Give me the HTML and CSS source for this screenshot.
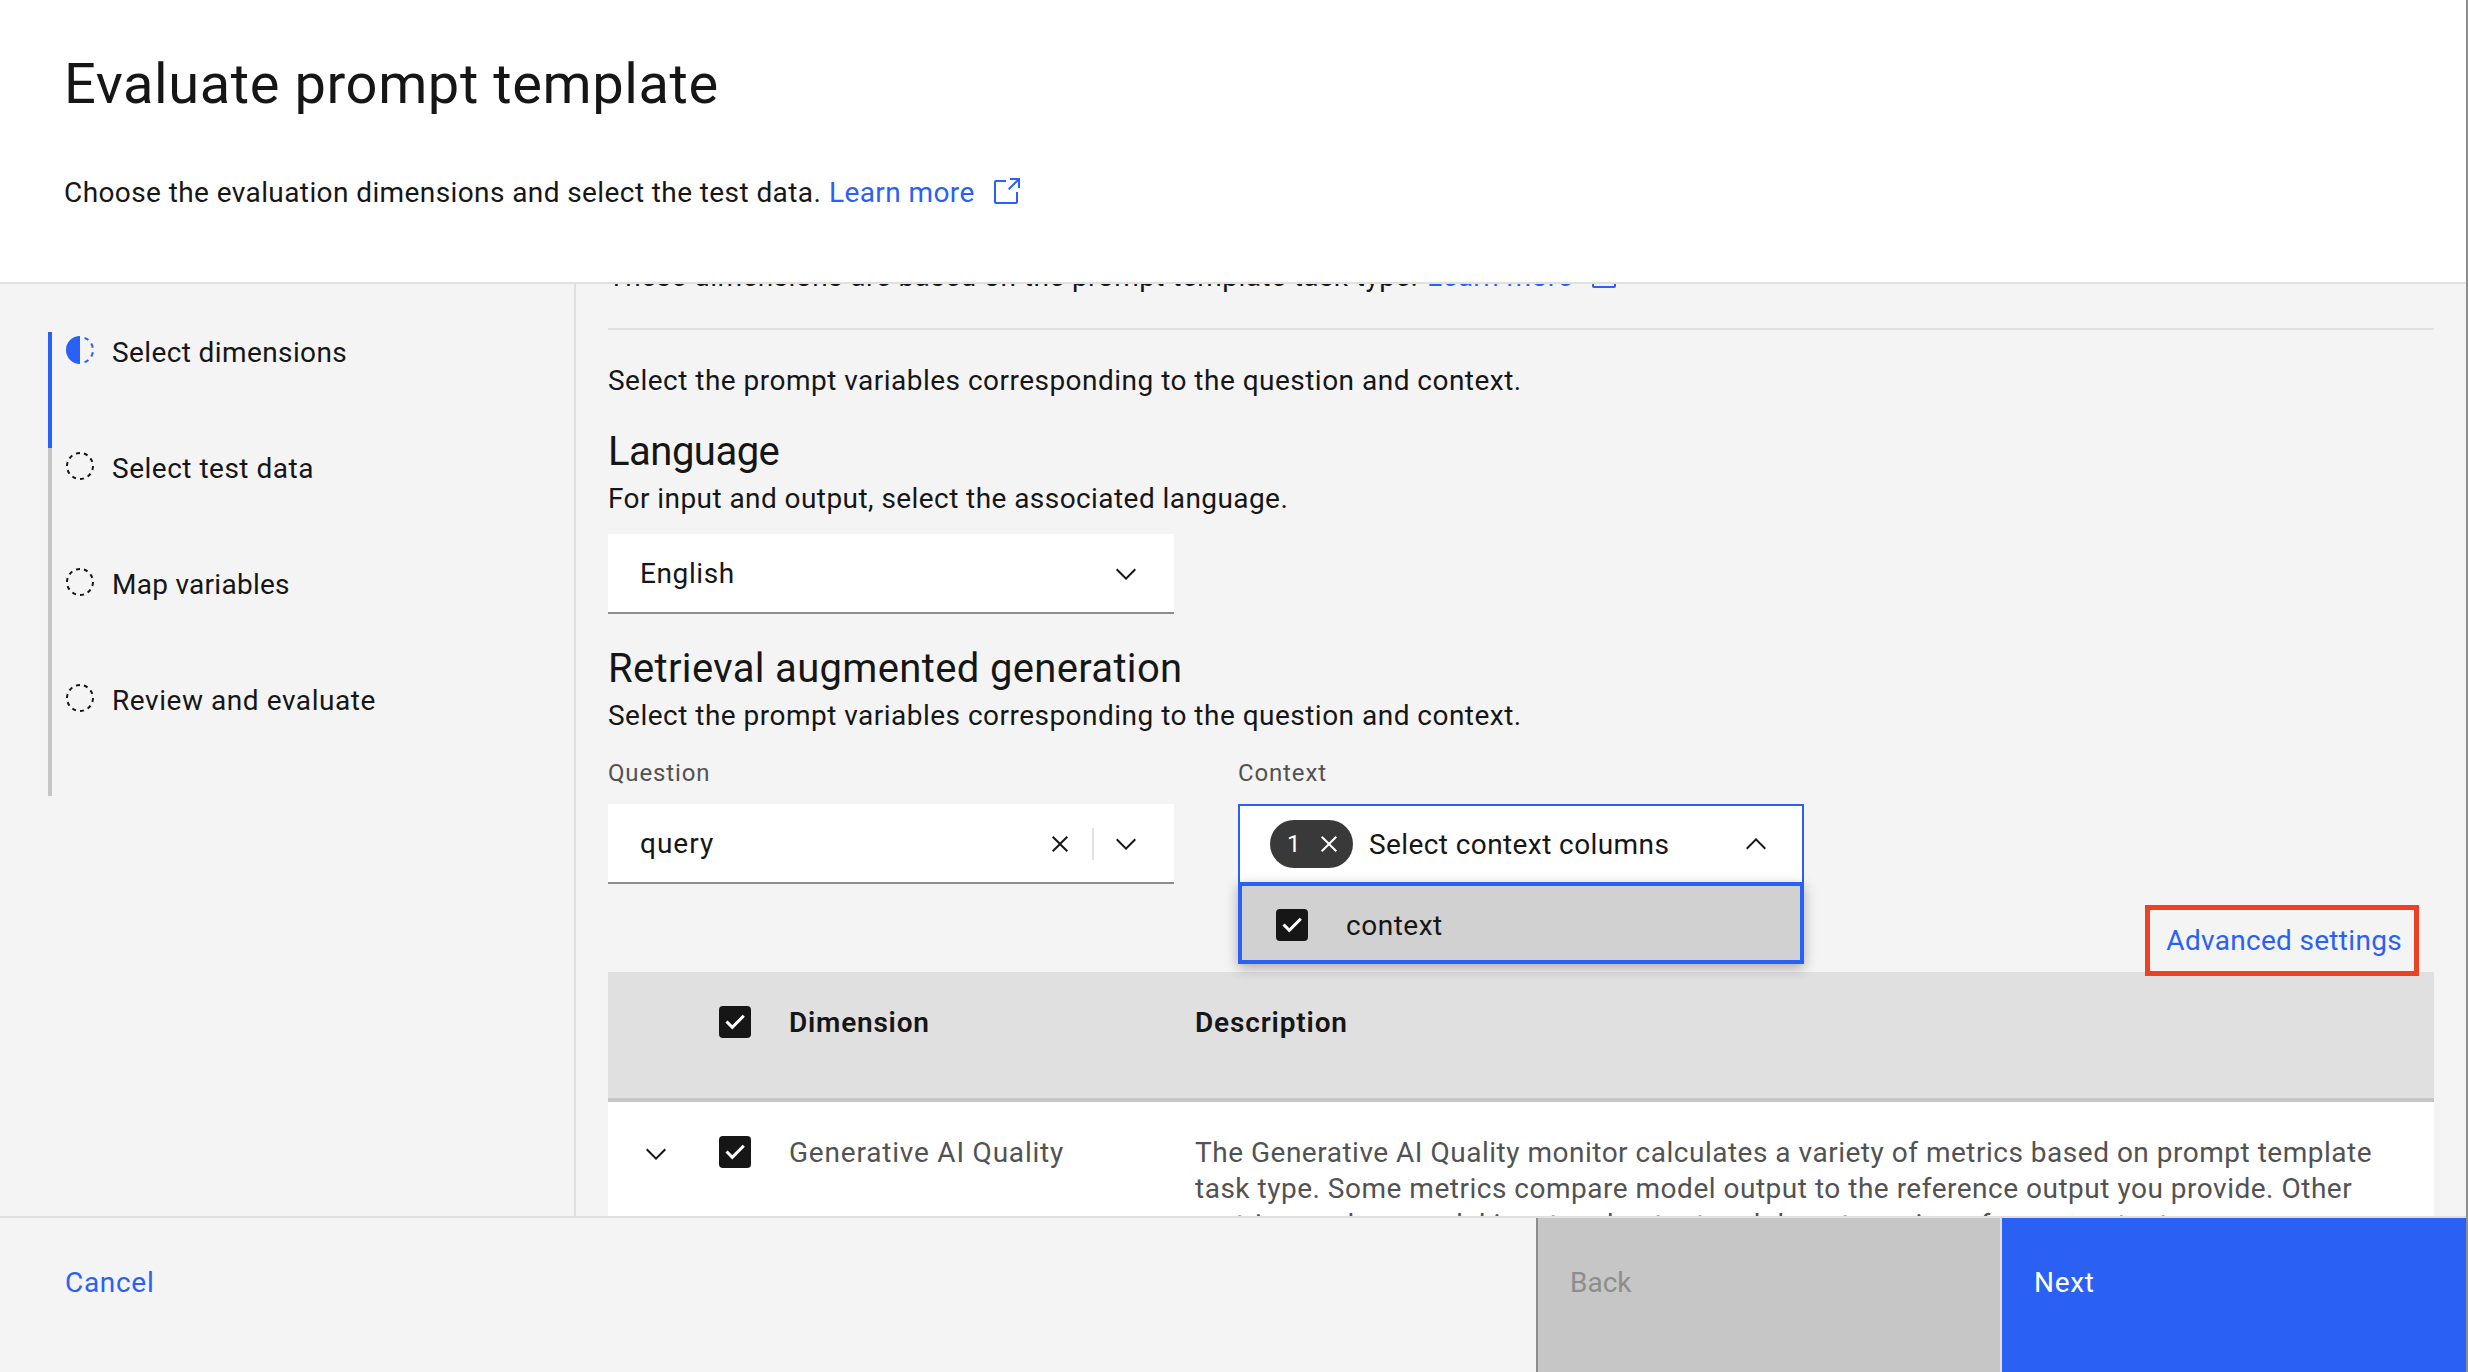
FILE: index.html
```
<!DOCTYPE html>
<html lang="en">
<head>
<meta charset="utf-8">
<title>Evaluate prompt template</title>
<link rel="stylesheet" href="styles.css">
</head>
<body>
<svg class="defs" aria-hidden="true">
  <symbol id="launch" viewBox="0 0 16 16"><path d="M13 14H3c-.6 0-1-.4-1-1V3c0-.6.4-1 1-1h5v1H3v10h10V8h1v5c0 .6-.4 1-1 1z"/><path d="M10 1v1h3.3L9 6.3l.7.7L14 2.7V6h1V1z"/></symbol>
  <symbol id="chevron-down" viewBox="0 0 16 16"><path d="M8 11L3 6l.7-.7L8 9.600l4.300-4.300.7.7z"/></symbol>
  <symbol id="chevron-up" viewBox="0 0 16 16"><path d="M8 5l5 5-.7.7L8 6.400l-4.300 4.300L3 10z"/></symbol>
  <symbol id="close" viewBox="0 0 16 16"><path d="M12 4.700L11.300 4 8 7.300 4.700 4l-.7.7L7.300 8 4 11.300l.7.7L8 8.700l3.300 3.300.7-.7L8.700 8z"/></symbol>
  <symbol id="current" viewBox="0 0 32 32"><path d="M23.764 6.859l1.285-1.531A13.976 13.976 0 0020.867 2.887l-.683 1.878A11.973 11.973 0 0123.764 6.859zM27.81 14l1.968-.413A13.889 13.889 0 0028.140 9.046L26.409 10A12.520 12.520 0 0127.810 14zM20.184 27.235l.683 1.878a13.976 13.976 0 004.182-2.441l-1.285-1.531A11.973 11.973 0 0120.184 27.235zM26.409 22L28.140 23a14.140 14.140 0 001.638-4.587L27.810 18.066A12.152 12.152 0 0126.409 22zM16 30V2a14 14 0 000 28z"/></symbol>
  <symbol id="pending" viewBox="0 0 32 32"><path d="M7.700 4.700a14.700 14.700 0 00-3 3.100L6.300 9a13.260 13.260 0 012.600-2.700zM4.600 12.300l-1.900-.6A12.510 12.510 0 002 16H4A11.480 11.480 0 014.600 12.300zM2.700 20.400a14.400 14.400 0 002 3.900l1.600-1.200a12.890 12.890 0 01-1.700-3.300zM7.800 27.300a14.400 14.400 0 003.900 2l.6-1.900A12.890 12.890 0 019 25.700zM11.700 2.700l.6 1.900A11.480 11.480 0 0116 4V2A12.510 12.510 0 0011.700 2.700zM24.200 27.300a15.180 15.180 0 003.100-3.100L25.700 23A11.530 11.530 0 0123 25.700zM27.400 19.700l1.900.6A15.470 15.470 0 0030 16H28A11.480 11.480 0 0127.400 19.700zM29.200 11.600a14.400 14.400 0 00-2-3.900L25.600 8.900a12.890 12.890 0 011.700 3.300zM24.100 4.600a14.400 14.400 0 00-3.900-2l-.6 1.900a12.890 12.890 0 013.300 1.700zM20.300 29.300l-.6-1.900A11.480 11.480 0 0116 28v2A21.420 21.420 0 0020.300 29.300z"/></symbol>
  <symbol id="checkbox" viewBox="0 0 32 32"><rect width="32" height="32" rx="4" fill="#161616"/><path d="M7.500 15.500l5.800 5.800L24.800 9.800" fill="none" stroke="#fff" stroke-width="3"/></symbol>
</svg>
<div class="modal">
  <header class="header">
    <h1 class="title">Evaluate prompt template</h1>
    <p class="subtitle"><span class="subtitle-text">Choose the evaluation dimensions and select the test data.</span><a class="link">Learn more</a><svg class="icon launch"><use href="#launch"/></svg></p>
  </header>
  <div class="body">
    <nav class="steps">
      <div class="step step-current"><svg class="icon"><use href="#current"/></svg><span class="s1">Select dimensions</span></div>
      <div class="step"><svg class="icon"><use href="#pending"/></svg><span class="s2">Select test data</span></div>
      <div class="step"><svg class="icon"><use href="#pending"/></svg><span class="s3">Map variables</span></div>
      <div class="step"><svg class="icon"><use href="#pending"/></svg><span class="s4">Review and evaluate</span></div>
    </nav>
    <main class="main">
      <p class="intro"><span class="intro-text">These dimensions are based on the prompt template task type.</span><a class="link">Learn more</a><svg class="icon launch"><use href="#launch"/></svg></p>
      <p class="lead">Select the prompt variables corresponding to the question and context.</p>
      <h2 class="heading language">Language</h2>
      <p class="hint hint-language">For input and output, select the associated language.</p>
      <div class="field field-language"><span class="value english">English</span><svg class="icon"><use href="#chevron-down"/></svg></div>
      <h2 class="heading rag">Retrieval augmented generation</h2>
      <p class="hint">Select the prompt variables corresponding to the question and context.</p>
      <div class="columns">
        <div class="column">
          <label class="label">Question</label>
          <div class="field"><span class="value query">query</span><svg class="icon"><use href="#close"/></svg><span class="divider"></span><svg class="icon"><use href="#chevron-down"/></svg></div>
        </div>
        <div class="column">
          <label class="label">Context</label>
          <div class="field field-open"><span class="tag">1<svg class="icon"><use href="#close"/></svg></span><span class="value placeholder">Select context columns</span><svg class="icon"><use href="#chevron-up"/></svg></div>
          <div class="menu"><svg class="icon"><use href="#checkbox"/></svg><span>context</span></div>
        </div>
      </div>
      <div class="toolbar"><a class="link advanced">Advanced settings</a></div>
      <div class="table">
        <div class="row row-head">
          <span></span><svg class="icon check"><use href="#checkbox"/></svg><span class="dimension">Dimension</span><span class="description">Description</span>
        </div>
        <div class="row">
          <svg class="icon expand"><use href="#chevron-down"/></svg><svg class="icon check"><use href="#checkbox"/></svg><span class="quality">Generative AI Quality</span>
          <span class="details">The Generative AI Quality monitor calculates a variety of metrics based on prompt template<br>task type. Some metrics compare model output to the reference output you provide. Other<br>metrics analyze model input and output and do not require reference output.</span>
        </div>
      </div>
    </main>
  </div>
  <footer class="footer">
    <a class="button cancel">Cancel</a>
    <a class="button back">Back</a>
    <a class="button next">Next</a>
  </footer>
</div>
</body>
</html>
```
FILE: styles.css
```
* { box-sizing: border-box; }
body {
  margin: 0;
  font: 400 28px/36px Roboto, "Liberation Sans", sans-serif;
  letter-spacing: 0.45px;
  color: #161616;
  background: #f4f4f4;
}
h1, h2, p { margin: 0; font-weight: 400; white-space: nowrap; }
.defs { position: absolute; width: 0; height: 0; }
.icon { display: block; flex: none; width: 32px; height: 32px; fill: currentColor; }
.link { color: #2b60f5; letter-spacing: 0.4px; }

.modal {
  display: flex;
  flex-direction: column;
  height: 1372px;
  border-right: 2px solid #8d8d8d;
}

/* header */
.header {
  flex: none;
  height: 284px;
  padding: 48px 64px 0;
  background: #fff;
  border-bottom: 2px solid #e0e0e0;
}
.title { font-size: 56px; line-height: 72px; letter-spacing: 0.6px; }
.subtitle, .intro { display: flex; }
.subtitle { margin-top: 55px; }
.subtitle-text { width: 765px; letter-spacing: 0.405px; }
.launch { color: #2b60f5; margin: 1px 0 0 15px; }

.body { display: flex; flex: 1; min-height: 0; }

/* progress steps */
.steps {
  flex: none;
  width: 576px;
  padding: 48px 0 0 48px;
  border-right: 2px solid #e0e0e0;
}
.step {
  display: flex;
  gap: 16px;
  height: 116px;
  padding: 2px 0 0 12px;
  border-left: 4px solid #c6c6c6;
}
.step span { padding-top: 1px; }
.step-current { border-color: #2b60f5; }
.step-current .icon { color: #2b60f5; }
.s1 { letter-spacing: 0.39px; }
.s2 { letter-spacing: 0.5px; }
.s3 { letter-spacing: 0.27px; }
.s4 { letter-spacing: 0.56px; }

/* content */
.main { flex: 1; min-width: 0; padding: 0 32px; overflow: hidden; }
.intro { height: 71px; margin-top: -25px; border-bottom: 2px solid #e0e0e0; }
.intro-text { width: 819px; letter-spacing: 0.446px; }
.lead { margin-top: 33px; letter-spacing: 0.48px; }
.heading { font-size: 40px; line-height: 48px; }
.language { margin-top: 29px; letter-spacing: -0.5px; }
.rag { margin-top: 31px; letter-spacing: 0.34px; }
.hint { margin-top: 5px; letter-spacing: 0.48px; }
.hint-language { letter-spacing: 0.431px; }

.field {
  display: flex;
  align-items: center;
  width: 566px;
  height: 80px;
  padding: 2px 32px 0;
  background: #fff;
  border-bottom: 2px solid #8d8d8d;
}
.field .value { flex: 1; }
.field-language { margin-top: 17px; }
.english { letter-spacing: 0.6px; }
.query { letter-spacing: 1px; }
.divider { width: 2px; height: 32px; margin: 0 16px; background: #e0e0e0; }

.columns { display: flex; gap: 64px; margin-top: 23px; }
.column { position: relative; }
.label {
  display: block;
  height: 47px;
  font-size: 24px;
  line-height: 32px;
  letter-spacing: 0.85px;
  color: #525252;
}
.field-open { padding: 0 30px; border: 2px solid #2b60f5; }
.tag {
  display: flex;
  align-items: center;
  gap: 12px;
  width: 83px;
  height: 48px;
  padding-left: 17px;
  margin-right: 16px;
  border-radius: 24px;
  background: #393939;
  color: #fff;
  font-size: 24px;
  line-height: 32px;
}
.placeholder { padding-top: 2px; letter-spacing: 0.406px; }
.menu {
  position: absolute;
  z-index: 2;
  left: 0;
  top: 125px;
  display: flex;
  gap: 38px;
  width: 566px;
  height: 82px;
  padding: 22px 0 0 34px;
  background: #d1d1d1;
  border: 4px solid #2b60f5;
  box-shadow: 0 4px 12px rgba(0, 0, 0, 0.3);
  letter-spacing: 0.52px;
}
.menu .icon { margin-top: 1px; }

.toolbar { display: flex; justify-content: flex-end; height: 88px; padding: 39px 32px 0 0; }
.advanced { position: relative; height: 36px; letter-spacing: 0.31px; }
.advanced::after {
  content: "";
  position: absolute;
  inset: -18px -17px -17px -21px;
  border: 5px solid #ee4023;
}

/* dimensions table */
.row {
  display: grid;
  grid-template-columns: 79px 70px 406px 1fr;
  align-items: start;
  padding: 33px 0 0 32px;
  background: #fff;
  color: #525252;
}
.row-head {
  height: 130px;
  background: #e0e0e0;
  border-bottom: 4px solid #c6c6c6;
  color: #161616;
  font-weight: 600;
}
.check { margin-top: 1px; }
.expand { margin-top: 3px; color: #161616; }
.dimension { letter-spacing: 0.78px; }
.description { letter-spacing: 0.84px; }
.quality { letter-spacing: 0.8px; }
.details { white-space: nowrap; letter-spacing: 0.508px; }

/* footer */
.footer {
  display: flex;
  flex: none;
  height: 156px;
  border-top: 2px solid #e0e0e0;
  background: #f4f4f4;
}
.button { padding-top: 47px; }
.cancel { flex: 1; padding-left: 65px; color: #2b60f5; letter-spacing: 0.7px; }
.back {
  width: 466px;
  padding-left: 32px;
  background: #c6c6c6;
  border-left: 2px solid #8d8d8d;
  border-right: 2px solid #e0e0e0;
  color: #8d8d8d;
  letter-spacing: 0;
}
.next { width: 464px; padding-left: 32px; background: #2b60f5; color: #fff; letter-spacing: 0.7px; }
```
